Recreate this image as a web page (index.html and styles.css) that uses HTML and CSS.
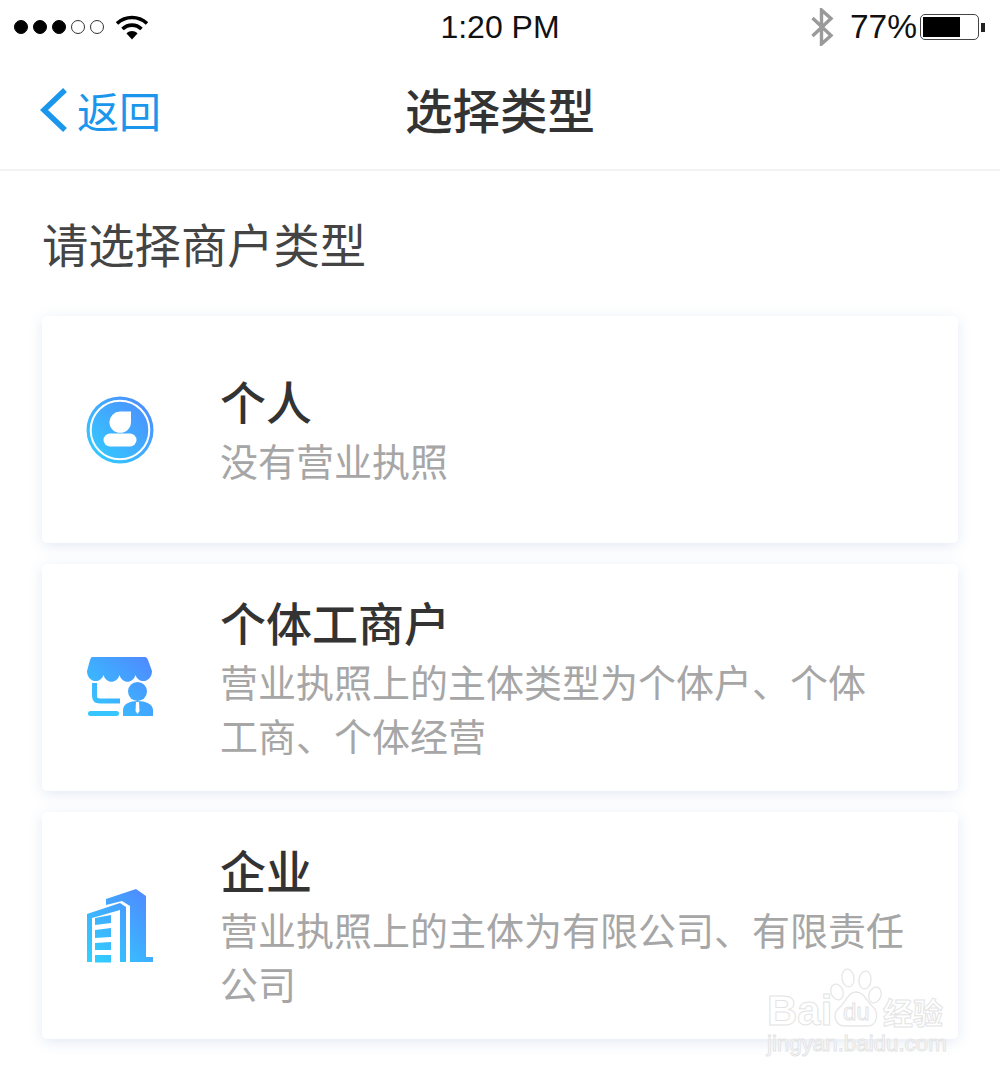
FILE: index.html
```html
<!DOCTYPE html>
<html lang="zh-CN">
<head>
    <meta charset="UTF-8">
    <meta name="viewport" content="width=device-width, initial-scale=1.0">
    <title>选择类型</title>
    <link rel="stylesheet" href="styles.css">
</head>
<body>

<svg class="defs" width="0" height="0" aria-hidden="true">
    <defs>
        <linearGradient id="blue" gradientUnits="userSpaceOnUse" x1="16" y1="84" x2="84" y2="16">
            <stop offset="0" stop-color="#30d2ff"/>
            <stop offset="1" stop-color="#5086ff"/>
        </linearGradient>
    </defs>
</svg>

<div class="status-bar">
    <div class="status-left">
        <span class="dot"></span><span class="dot"></span><span class="dot"></span>
        <span class="dot empty"></span><span class="dot empty"></span>
        <svg class="wifi" width="32" height="26" viewBox="0 0 32 26">
            <path d="M1 9.500C9.500 1.500 22.500 1.500 31 9.500" fill="none" stroke="#000" stroke-width="3.600"/>
            <path d="M6.500 15C12 9.800 20 9.800 25.500 15" fill="none" stroke="#000" stroke-width="3.600"/>
            <path d="M10.500 19.500C13.800 16.300 18.200 16.300 21.500 19.500L16 25.500Z"/>
        </svg>
    </div>
    <div class="status-time">1:20 PM</div>
    <div class="status-right">
        <svg class="bluetooth" width="24" height="38" viewBox="0 0 24 38">
            <path d="M2.500 10L21 27.500L11.500 36V2L21 10.500L2.500 28" fill="none" stroke="#9a9a9a" stroke-width="3.400"/>
        </svg>
        <span class="battery-text">77%</span>
        <div class="battery"><div class="battery-fill"></div></div>
        <div class="battery-nub"></div>
    </div>
</div>

<div class="nav-bar">
    <div class="back">
        <svg width="28" height="46" viewBox="0 0 28 46">
            <path d="M25 3L4 23L25 43" fill="none" stroke="#1a96ec" stroke-width="5.500"/>
        </svg>
        <span>返回</span>
    </div>
    <div class="nav-title">选择类型</div>
</div>

<div class="content">
    <h2>请选择商户类型</h2>

    <div class="card">
        <svg class="card-icon" width="68" height="68" viewBox="16 16 68 68">
            <circle cx="50" cy="50" r="33.500" fill="url(#blue)"/>
            <circle cx="50" cy="50" r="29.300" fill="none" stroke="#fff" stroke-width="2"/>
            <path d="M50 31.500H61V42A10.800 10.800 0 0 1 39.400 42A10.800 10.800 0 0 1 50 31.500Z" fill="#fff"/>
            <rect x="33.500" y="53.500" width="33" height="13" rx="6.500" fill="#fff"/>
        </svg>
        <div class="card-text">
            <div class="card-title">个人</div>
            <div class="card-desc">没有营业执照</div>
        </div>
    </div>

    <div class="card">
        <svg class="card-icon" width="68" height="82" viewBox="16 -4 68 82">
            <path d="M22 16H75Q77 16 78 19L82 30C82 41 69 44 65.500 34C63 43 52 43 49.500 34C47 43 36 43 33.500 34C30 44 17 41 17 30L20 19Q21 16 22 16Z" fill="url(#blue)"/>
            <path d="M24.500 42V55Q24.500 60 30 60H50" fill="none" stroke="url(#blue)" stroke-width="5"/>
            <rect x="18" y="70" width="31" height="5" rx="2.500" fill="#36c5ff"/>
            <circle cx="67.500" cy="50.500" r="9.500" fill="url(#blue)"/>
            <path d="M53 75V69C53 63 60 60 67.500 60C75 60 83 63 83 69V75Z" fill="url(#blue)"/>
            <path d="M66 61H69L69.500 70L67.500 73L65.500 70Z" fill="#fff"/>
        </svg>
        <div class="card-text">
            <div class="card-title">个体工商户</div>
            <div class="card-desc">营业执照上的主体类型为个体户、个体<br>工商、个体经营</div>
        </div>
    </div>

    <div class="card">
        <svg class="card-icon" width="68" height="80" viewBox="16 10 68 80">
            <path d="M36 23L66 13L76 20V81H83V86H60V30L52 25L36 29Z" fill="url(#blue)"/>
            <path d="M17 38L50 27L56 31V86H50V34L22 42V86H17Z" fill="url(#blue)"/>
            <path d="M25 42L41 39V47L25 49Z M25 54L41 52V61L25 62Z M25 67L41 66V74H25Z M25 79H41V86.500H25Z" fill="url(#blue)"/>
        </svg>
        <div class="card-text">
            <div class="card-title">企业</div>
            <div class="card-desc">营业执照上的主体为有限公司、有限责任<br>公司</div>
        </div>
    </div>
</div>

<div class="watermark">
    <div class="wm-top">
        <span class="wm-bai">Bai</span>
        <div class="wm-paw">
            <svg width="58" height="62" viewBox="0 0 58 62">
                <g fill="rgba(255,255,255,.6)" stroke="#e6e6e6" stroke-width="1.300">
                    <ellipse cx="12" cy="24" rx="6" ry="8" transform="rotate(-20 12 24)"/>
                    <ellipse cx="23" cy="10" rx="6" ry="9" transform="rotate(-8 23 10)"/>
                    <ellipse cx="40" cy="12" rx="6" ry="9" transform="rotate(8 40 12)"/>
                    <ellipse cx="50" cy="27" rx="6" ry="8" transform="rotate(20 50 27)"/>
                    <path d="M31 24C39 24 41 32 47 38C55 45 52 58 42 58H20C10 58 7 46 14 40C21 34 23 24 31 24Z"/>
                </g>
            </svg>
            <span class="wm-du">du</span>
        </div>
        <span class="wm-jy">经验</span>
    </div>
    <div class="wm-url">jingyan.baidu.com</div>
</div>

</body>
</html>
```

FILE: styles.css
```css
body {
    position: relative;
    margin: 0;
    height: 1076px;
    overflow: hidden;
    background: #fff;
    color: #333;
    font-family: "Noto Sans CJK SC", sans-serif;
}
.defs { position: absolute; }

.status-bar {
    display: grid;
    grid-template-columns: 1fr auto 1fr;
    align-items: center;
    height: 54px;
    padding: 0 14px;
    color: #111;
    font-family: "Liberation Sans", sans-serif;
}
.status-left { display: flex; align-items: center; }
.dot {
    box-sizing: border-box;
    width: 14px;
    height: 14px;
    margin-right: 5px;
    border: 1.500px solid #000;
    border-radius: 50%;
    background: #000;
}
.dot.empty { background: #fff; border-color: #333; }
.wifi { margin: -1px 0 0 7px; }
.status-time { font-size: 32px; }
.status-right { display: flex; align-items: center; justify-content: flex-end; }
.bluetooth { margin-right: 16px; }
.battery-text { margin-right: 3px; font-size: 33.500px; }
.battery {
    box-sizing: border-box;
    width: 59px;
    height: 26px;
    padding: 2px;
    border: 1.500px solid #444;
    border-radius: 5px;
}
.battery-fill { width: 37px; height: 100%; background: #000; }
.battery-nub { width: 4px; height: 9px; margin: 0 1px 0 2px; background: #222; }

.nav-bar {
    position: relative;
    display: flex;
    align-items: center;
    justify-content: center;
    height: 115px;
    border-bottom: 2px solid #f3f3f3;
}
.back {
    position: absolute;
    left: 40px;
    top: 33px;
    display: flex;
    align-items: center;
    color: #1a96ec;
    font-size: 42px;
    line-height: 44px;
}
.back svg { margin-right: 9px; }
.nav-title { margin-top: -7px; font-size: 47.500px; font-weight: 500; }

.content { padding: 0 42px; }
h2 {
    margin: 45px 0 46px;
    color: #444;
    font-size: 46.300px;
    font-weight: 400;
    line-height: 54px;
}
.card {
    display: flex;
    align-items: center;
    box-sizing: border-box;
    height: 227px;
    margin-bottom: 21px;
    padding-left: 44px;
    border-radius: 5px;
    box-shadow: 0 3px 14px rgba(90, 130, 190, 0.17);
}
.card-icon { flex: none; margin-right: 66px; }
.card-text { padding-bottom: 2px; }
.card-title { font-size: 46px; font-weight: 500; line-height: 60px; }
.card-desc { margin-top: 3px; color: #a6a6a6; font-size: 38px; line-height: 54px; }

.watermark {
    position: absolute;
    left: 767px;
    top: 968px;
    width: 180px;
    color: rgba(255, 255, 255, 0.7);
    -webkit-text-stroke: 1px #e4e4e4;
    font-family: "Liberation Sans", sans-serif;
}
.wm-top { display: flex; align-items: flex-end; height: 62px; }
.wm-bai { flex: none; width: 58px; margin-bottom: -4px; font-size: 42px; font-weight: 700; line-height: 46px; }
.wm-paw { position: relative; flex: none; width: 58px; height: 62px; }
.wm-paw svg { display: block; }
.wm-du {
    position: absolute;
    left: 18px;
    bottom: 4px;
    font-size: 24px;
    line-height: 28px;
}
.wm-jy {
    flex: none;
    margin-bottom: 2px;
    font-family: "Noto Sans CJK SC", sans-serif;
    font-size: 30px;
    font-weight: 700;
    line-height: 34px;
    white-space: nowrap;
}
.wm-url { margin-top: 1px; font-size: 22.300px; line-height: 26px; white-space: nowrap; }
```
